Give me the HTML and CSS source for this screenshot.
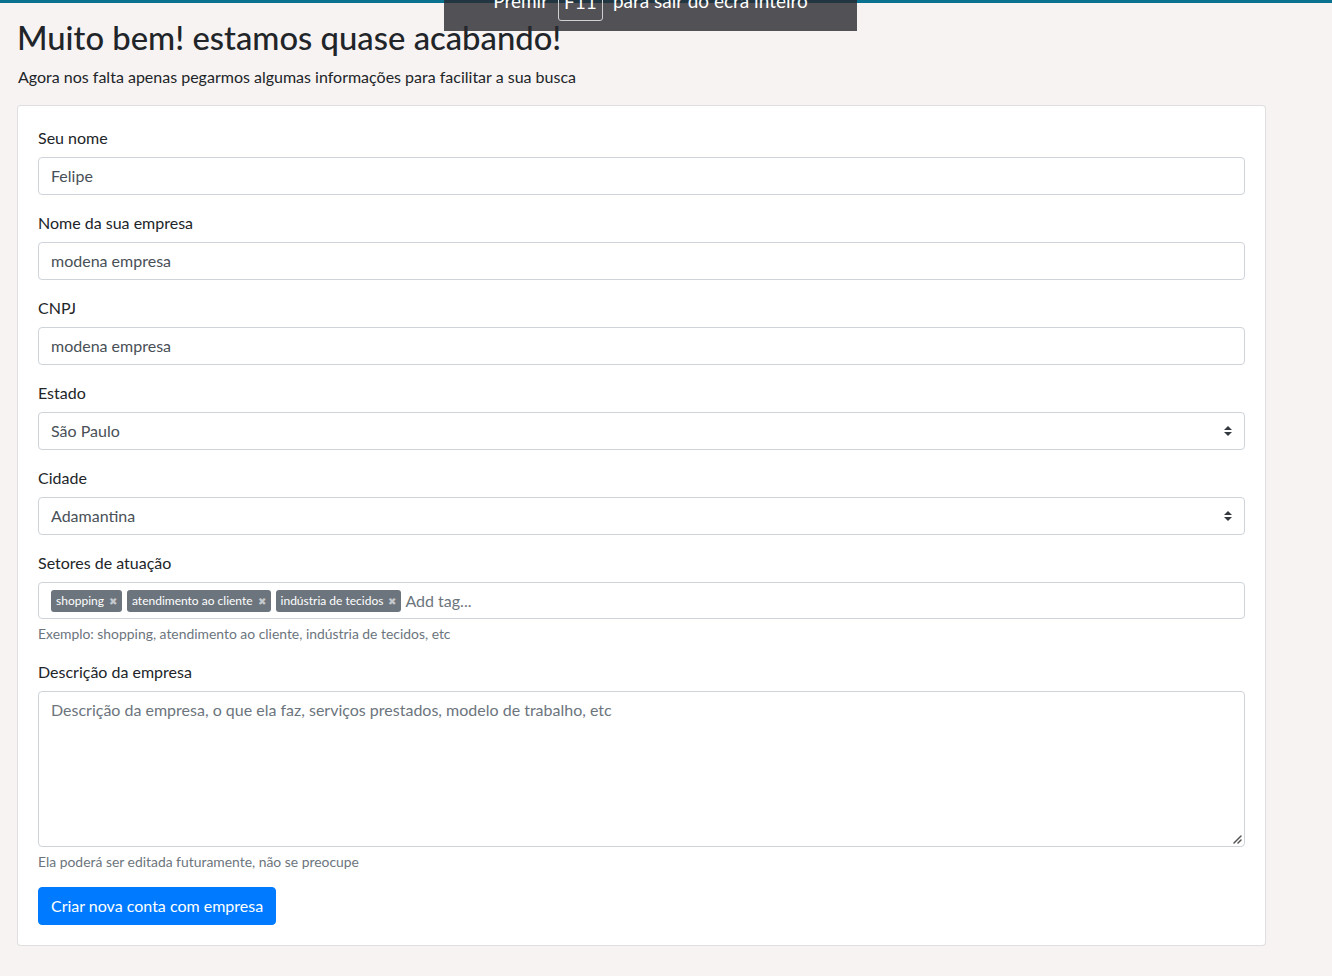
FILE: index.html
```html
<!DOCTYPE html>
<html lang="pt">
<head>
<meta charset="utf-8">
<title>Cadastro</title>
<link rel="stylesheet" href="styles.css">
</head>
<body>
<div class="topbar"></div>
<div class="fs-notice">
  <div class="fs-inner"><span>Premir</span><span class="kbd">F11</span><span>para sair do ecrã inteiro</span></div>
</div>
<main class="page">
  <h2 class="title">Muito bem! estamos quase acabando!</h2>
  <p class="lead">Agora nos falta apenas pegarmos algumas informações para facilitar a sua busca</p>
  <div class="card">
    <div class="group">
      <label class="label">Seu nome</label>
      <div class="control">Felipe</div>
    </div>
    <div class="group">
      <label class="label">Nome da sua empresa</label>
      <div class="control">modena empresa</div>
    </div>
    <div class="group">
      <label class="label">CNPJ</label>
      <div class="control">modena empresa</div>
    </div>
    <div class="group">
      <label class="label">Estado</label>
      <div class="control select"><span>São Paulo</span><svg class="caret" width="8" height="10" viewBox="0 0 4 5"><path fill="#343a40" d="M2 0L0 2h4zm0 5L0 3h4z"/></svg></div>
    </div>
    <div class="group">
      <label class="label">Cidade</label>
      <div class="control select"><span>Adamantina</span><svg class="caret" width="8" height="10" viewBox="0 0 4 5"><path fill="#343a40" d="M2 0L0 2h4zm0 5L0 3h4z"/></svg></div>
    </div>
    <div class="group group-tags">
      <label class="label">Setores de atuação</label>
      <div class="control tags">
        <span class="tag">shopping<span class="x">✖</span></span>
        <span class="tag">atendimento ao cliente<span class="x">✖</span></span>
        <span class="tag">indústria de tecidos<span class="x">✖</span></span>
        <span class="placeholder big">Add tag...</span>
      </div>
      <small class="help">Exemplo: shopping, atendimento ao cliente, indústria de tecidos, etc</small>
    </div>
    <div class="group">
      <label class="label">Descrição da empresa</label>
      <div class="control textarea"><span class="placeholder">Descrição da empresa, o que ela faz, serviços prestados, modelo de trabalho, etc</span>
        <svg class="grip" width="10" height="10" viewBox="0 0 10 10"><path d="M9 2L2 9M9 6L6 9" stroke="#555" stroke-width="1.5" stroke-linecap="round"/></svg>
      </div>
      <small class="help">Ela poderá ser editada futuramente, não se preocupe</small>
    </div>
    <button class="btn">Criar nova conta com empresa</button>
  </div>
</main>
</body>
</html>
```

FILE: styles.css
```css
* { box-sizing: border-box; }
html, body { margin: 0; }
body {
  background: #f7f3f2;
  font-family: Lato, "Noto Sans", sans-serif;
  color: #212529;
  font-size: 16px;
  line-height: 1.5;
  min-height: 976px;
  position: relative;
}
.topbar { height: 3px; background: #0b7190; }
.fs-notice {
  position: absolute;
  left: 444px;
  top: 0;
  width: 413px;
  height: 31px;
  background: rgba(40, 40, 46, 0.8);
  color: #fff;
  overflow: hidden;
  font-size: 19px;
}
.fs-inner {
  display: flex;
  justify-content: center;
  align-items: flex-start;
  gap: 10px;
  margin-top: -14px;
  line-height: 30px;
}
.kbd {
  border: 1px solid #d0d0d0;
  border-radius: 3px;
  padding: 0 5px 3px;
}
.page { padding: 0 66px 0 17px; }
.title {
  margin: 15px 0 8px;
  font-size: 32.8px;
  font-weight: 500;
  line-height: 1.2;
}
.lead { margin: 0 0 16px 1px; }
.card {
  background: #fff;
  border: 1px solid rgba(0, 0, 0, 0.125);
  border-radius: 4px;
  padding: 20px;
}
.group { margin-bottom: 16px; }
.group-tags { margin-bottom: 17px; }
.label { display: block; margin-bottom: 7px; }
.control {
  height: 38px;
  border: 1px solid #ced4da;
  border-radius: 4px;
  padding: 6px 12px;
  color: #495057;
  display: flex;
  align-items: center;
}
.select { justify-content: space-between; }
.caret { flex: none; }
.tags { gap: 5px; height: 37px; padding: 0 12px; }
.tag {
  background: #6c757d;
  color: #fff;
  font-size: 12px;
  border-radius: 3px;
  padding: 2px 5px;
  line-height: 18px;
  display: inline-flex;
  align-items: center;
  gap: 5px;
}
.x { color: #c4c8cc; font-size: 10px; }
.placeholder { color: #6c757d; }
.big { font-size: 16px; margin-left: -1px; }
.help {
  display: block;
  margin-top: 6px;
  font-size: 13.9px;
  color: #6c757d;
  line-height: 18px;
}
.textarea {
  height: 156px;
  align-items: flex-start;
  justify-content: space-between;
  padding: 6px 12px;
  position: relative;
}
.grip { position: absolute; right: 2px; bottom: 2px; }
.btn {
  font: inherit;
  color: #fff;
  background: #007bff;
  border: 1px solid #007bff;
  border-radius: 4px;
  padding: 6px 12px;
  height: 38px;
  line-height: 24px;
  margin-top: 0;
}
```
